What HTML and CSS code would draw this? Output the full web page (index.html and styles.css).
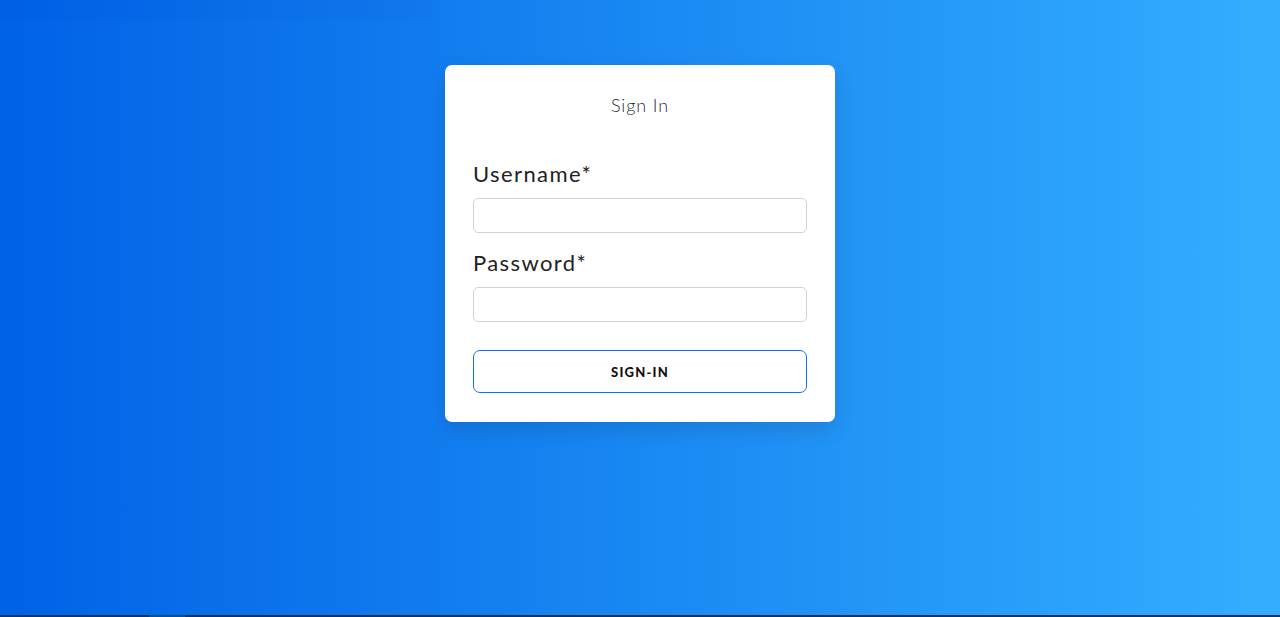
FILE: index.html
```html
<!DOCTYPE html>
<html>
<head>
<meta charset="utf-8">
<link rel="stylesheet" href="styles.css">
</head>
<body>
<div class="topstrip"></div>
<main class="page">
  <form class="card">
    <h5 class="title">Sign In</h5>
    <label class="label" for="u">Username*</label>
    <input class="field" id="u" type="text">
    <label class="label label-2" for="p">Password*</label>
    <input class="field" id="p" type="password">
    <button class="btn" type="button">SIGN-IN</button>
  </form>
</main>
<div class="bottombar"><span class="thumb"></span></div>
</body>
</html>
```
FILE: styles.css
```css
* { box-sizing: border-box; }
html, body { margin: 0; height: 100%; }
body {
  font-family: "Lato", "Open Sans", sans-serif;
  background: linear-gradient(to right, #0062e6, #33aeff);
  display: flex;
  flex-direction: column;
  overflow: hidden;
  position: relative;
}
.topstrip {
  position: absolute;
  left: 0; top: 0;
  width: 432px; height: 20px;
  background: rgba(0, 60, 200, 0.05);
}
.page {
  flex: 1;
  display: flex;
  justify-content: center;
  align-items: flex-start;
  padding-top: 65px;
}
.card {
  width: 390px;
  height: 357px;
  background: #fff;
  border-radius: 7px;
  box-shadow: 0 8px 20px rgba(0, 0, 0, 0.12);
  padding: 28px 28px 0 28px;
  display: flex;
  flex-direction: column;
}
.title {
  margin: 0;
  text-align: center;
  font-size: 18px;
  font-weight: 300;
  color: #2a2a3a;
  line-height: 24px;
  letter-spacing: 0.9px;
}
.label {
  margin-top: 43px;
  font-size: 22px;
  font-weight: 400;
  color: #222;
  line-height: 28px;
  letter-spacing: 1.4px;
}
.label-2 { margin-top: 16px; }
.field {
  margin-top: 10px;
  height: 35px;
  width: 100%;
  border: 1px solid #ced4da;
  border-radius: 5px;
  background: #fff;
}
.btn {
  margin-top: 28px;
  height: 43px;
  width: 100%;
  background: #fff;
  border: 1px solid #0d6efd;
  border-radius: 7px;
  font-family: "Lato", sans-serif;
  font-weight: 900;
  font-size: 13px;
  letter-spacing: 1.2px;
  color: #111;
}
.bottombar {
  height: 2px;
  background: #06335f;
  position: relative;
}
.thumb {
  position: absolute;
  left: 149px; top: 0;
  width: 36px; height: 2px;
  background: #0b4f8f;
}
```
